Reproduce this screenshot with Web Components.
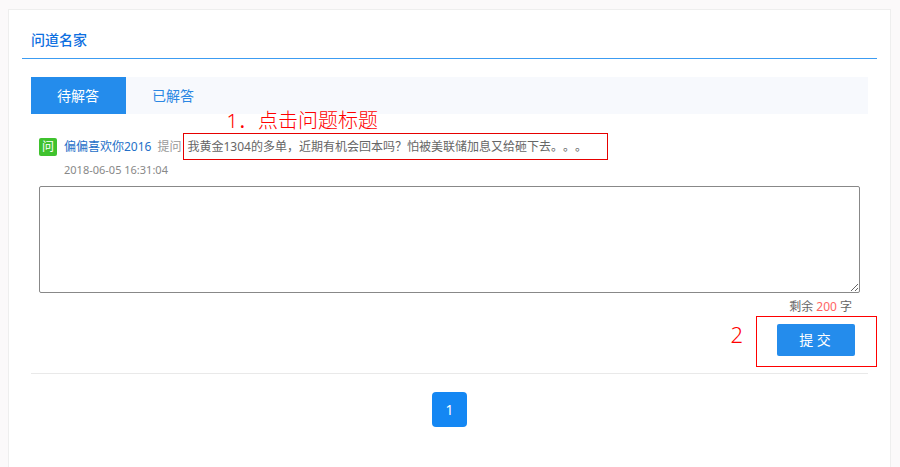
<!DOCTYPE html>
<html lang="zh-CN">
<head>
<meta charset="utf-8">
<title>问道名家</title>
<style>
	body {
		margin: 0;
		min-height: 100vh;
		display: flex;
		background: #fbf9fa;
		font: 12px/18px 'Noto Sans', 'Noto Sans CJK SC', sans-serif;
		font-kerning: none;
		text-spacing-trim: space-all;
		color: #666;
	}
</style>
</head>
<body>

<expert-panel heading='问道名家'>
	<tab-bar></tab-bar>
	<question-item user='偏偏喜欢你2016' date='2018-06-05 16:31:04'>我黄金1304的多单，近期有机会回本吗？怕被美联储加息又给砸下去。。。</question-item>
	<answer-form limit='200'></answer-form>
	<page-nav></page-nav>
</expert-panel>

<script>
const makeTemplate = html => {
	const template = document.createElement('template')
	template.innerHTML = html
	return template
}

const panelTemplate = makeTemplate(`
<style>
	:host {
		display: block;
		flex: 1;
		box-sizing: border-box;
		margin: 9px 9px 0 8px;
		padding: 12px 13px;
		border: 1px solid #eee;
		border-bottom: 0;
		background: #fff;
	}
	h2 {
		margin: 0;
		padding: 8px 9px;
		border-bottom: 1px solid #3c9cf2;
		font-size: 14px;
		line-height: 20px;
		font-weight: 500;
		color: #0d6fe0;
	}
	.content {
		padding: 18px 9px 0;
	}
</style>
<h2></h2>
<div class='content'><slot></slot></div>
`)

class ExpertPanel extends HTMLElement {
	constructor() {
		super()
		this.attachShadow({ mode: 'open' })
		this.shadowRoot.appendChild(panelTemplate.content.cloneNode(true))
		this.shadowRoot.querySelector('h2').textContent = this.getAttribute('heading')
	}
}

const tabTemplate = makeTemplate(`
<style>
	:host {
		display: flex;
		background: #f7f9fd;
	}
	button {
		height: 37px;
		padding: 0 27px 0 26px;
		border: 0;
		background: none;
		font: inherit;
		font-size: 14px;
		color: #2b87e3;
		cursor: pointer;
	}
	button.active {
		background: #248cec;
		color: #fff;
	}
</style>
<button class='active'>待解答</button>
<button>已解答</button>
`)

class TabBar extends HTMLElement {
	constructor() {
		super()
		this.attachShadow({ mode: 'open' })
		this.shadowRoot.appendChild(tabTemplate.content.cloneNode(true))
	}

	connectedCallback() {
		const tabs = this.shadowRoot.querySelectorAll('button')
		tabs.forEach(tab => {
			tab.addEventListener('click', () => {
				tabs.forEach(t => t.classList.toggle('active', t === tab))
			})
		})
	}
}

const questionTemplate = makeTemplate(`
<style>
	:host {
		display: block;
		padding: 19px 8px 7px;
	}
	.row {
		display: flex;
		align-items: center;
	}
	.badge {
		width: 18px;
		height: 18px;
		margin-right: 7px;
		border-radius: 2px;
		background: #3fc22e;
		color: #fff;
		text-align: center;
	}
	a {
		text-decoration: none;
		color: #2470c8;
	}
	.asked {
		margin: 0 2px 0 6px;
		color: #999;
	}
	.title {
		position: relative;
		box-sizing: border-box;
		width: 425px;
		padding: 3px;
		border: 1px solid #e60000;
		line-height: 19px;
		color: #666;
	}
	.note {
		position: absolute;
		left: 42px;
		bottom: 25px;
		font-size: 20px;
		line-height: 26px;
		font-weight: 300;
		color: #f00;
		white-space: nowrap;
	}
	time {
		display: block;
		padding: 1px 0 0 25px;
		font-size: 11px;
		color: #888;
	}
</style>
<div class='row'>
	<span class='badge'>问</span>
	<a class='user' href='#'></a>
	<span class='asked'>提问</span>
	<a class='title' href='#'><slot></slot><span class='note'>1．点击问题标题</span></a>
</div>
<time></time>
`)

class QuestionItem extends HTMLElement {
	constructor() {
		super()
		this.attachShadow({ mode: 'open' })
		this.shadowRoot.appendChild(questionTemplate.content.cloneNode(true))
		this.shadowRoot.querySelector('.user').textContent = this.getAttribute('user')
		this.shadowRoot.querySelector('time').textContent = this.getAttribute('date')
	}
}

const formTemplate = makeTemplate(`
<style>
	:host {
		display: block;
		border-bottom: 1px solid #e9e9e9;
	}
	form {
		display: flex;
		flex-direction: column;
		padding: 0 8px 6px;
	}
	textarea {
		box-sizing: border-box;
		width: 100%;
		height: 107px;
		padding: 4px;
		border: 1px solid #888;
		border-radius: 2px;
		outline: 0;
		font: inherit;
		color: #333;
		resize: both;
	}
	.left {
		align-self: flex-end;
		margin: 5px 8px 0 0;
	}
	output {
		color: #ff6464;
	}
	.submit {
		position: relative;
		align-self: flex-end;
		margin-right: -17px;
		padding: 7px 21px 10px 20px;
		border: 1px solid #f00;
	}
	.note {
		position: absolute;
		right: 133px;
		top: 4px;
		font-size: 22px;
		line-height: 26px;
		font-weight: 300;
		color: #f00;
	}
	button {
		display: block;
		width: 78px;
		height: 32px;
		padding: 0 2px 0 0;
		border: 0;
		border-radius: 2px;
		background: #248cec;
		font: inherit;
		font-size: 14px;
		color: #fff;
		cursor: pointer;
	}
</style>
<form>
	<textarea id='answer' aria-label='回答'></textarea>
	<div class='left'>剩余 <output for='answer'></output> 字</div>
	<div class='submit'><span class='note'>2</span><button type='submit'>提 交</button></div>
</form>
`)

class AnswerForm extends HTMLElement {
	constructor() {
		super()
		this.limit = Number(this.getAttribute('limit'))
		this.attachShadow({ mode: 'open' })
		this.shadowRoot.appendChild(formTemplate.content.cloneNode(true))
		this.textarea = this.shadowRoot.querySelector('textarea')
		this.textarea.maxLength = this.limit
		this.updateCount()
	}

	updateCount() {
		this.shadowRoot.querySelector('output').textContent =
			this.limit - this.textarea.value.length
	}

	connectedCallback() {
		this.textarea.addEventListener('input', () => this.updateCount())
		this.shadowRoot
			.querySelector('form')
			.addEventListener('submit', e => e.preventDefault())
	}
}

const navTemplate = makeTemplate(`
<style>
	:host {
		display: flex;
		justify-content: center;
		padding-top: 18px;
	}
	a {
		width: 35px;
		border-radius: 4px;
		background: #1487f3;
		font-size: 14px;
		line-height: 35px;
		text-align: center;
		text-decoration: none;
		color: #fff;
	}
</style>
<a href='#'>1</a>
`)

class PageNav extends HTMLElement {
	constructor() {
		super()
		this.attachShadow({ mode: 'open' })
		this.shadowRoot.appendChild(navTemplate.content.cloneNode(true))
	}
}

window.customElements.define('expert-panel', ExpertPanel)
window.customElements.define('tab-bar', TabBar)
window.customElements.define('question-item', QuestionItem)
window.customElements.define('answer-form', AnswerForm)
window.customElements.define('page-nav', PageNav)
</script>
</body>
</html>
